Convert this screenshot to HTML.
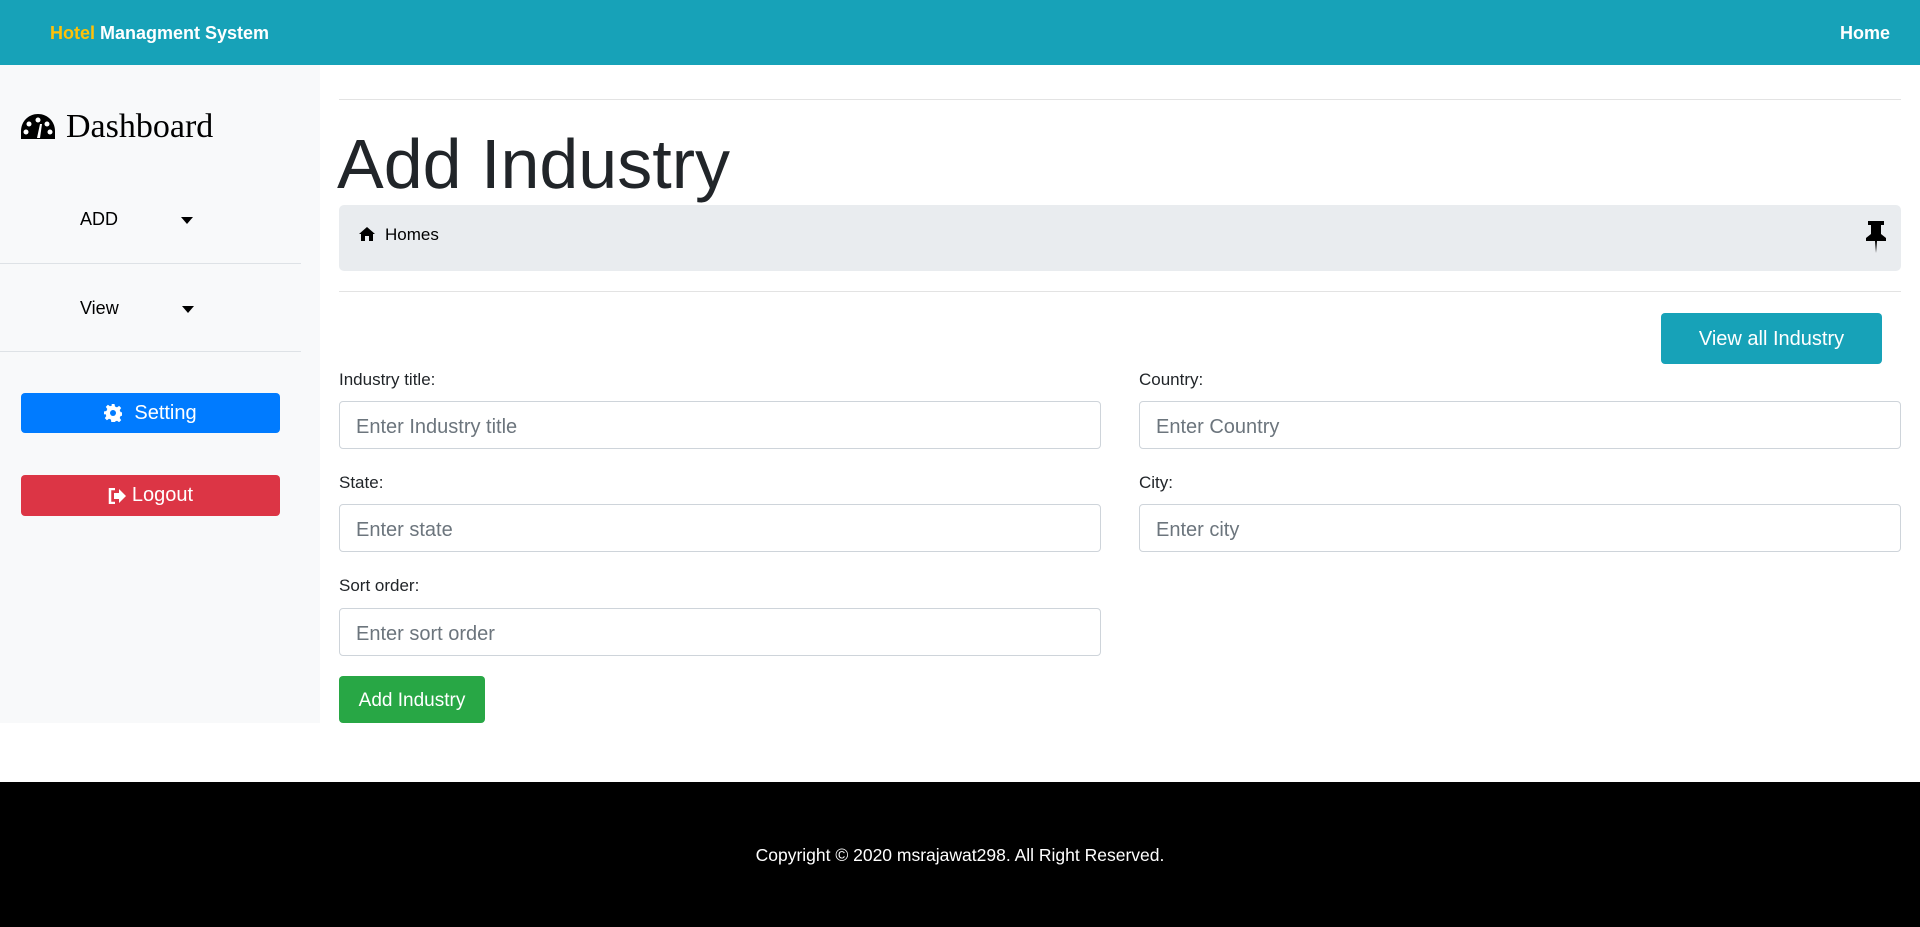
<!DOCTYPE html>
<html><head><meta charset="utf-8"><style>
*{box-sizing:border-box;margin:0;padding:0}
body{width:1920px;height:927px;overflow:hidden;font-family:"Liberation Sans",sans-serif;color:#212529;background:#fff;position:relative}
.nav{position:absolute;left:0;top:0;width:1920px;height:65px;background:#17a2b8}
.brand{position:absolute;left:50px;top:23px;font-size:18px;font-weight:bold;color:#fff}
.brand span{color:#ffc107}
.home{position:absolute;right:30px;top:23px;font-size:18px;font-weight:bold;color:#fff}
.side{position:absolute;left:0;top:65px;width:320px;height:658px;background:#f8f9fa}
.dash{position:absolute;left:20px;top:108px;font-family:"Liberation Serif",serif;font-size:34px;color:#000;display:flex;align-items:center;gap:10px}
.menu{position:absolute;left:80px;font-size:18px;color:#000}
.caret{position:absolute;width:0;height:0;border-left:6px solid transparent;border-right:6px solid transparent;border-top:7px solid #000}
.sh{position:absolute;left:0;width:301px;height:1px;background:#dee2e6}
.btn{position:absolute;border-radius:4px;color:#fff;font-size:20px;display:flex;align-items:center;justify-content:center;gap:12px}
.hr{position:absolute;left:339px;width:1562px;height:1px;background:#e3e3e3}
h1{position:absolute;left:337px;top:124px;font-size:70px;font-weight:normal;color:#212529}
.bc{position:absolute;left:339px;top:205px;width:1562px;height:66px;background:#e9ecef;border-radius:5px}
.lab{position:absolute;font-size:17px;color:#212529}
.inp{position:absolute;width:762px;height:48px;border:1px solid #ced4da;border-radius:4px;font-size:20px;color:#6c757d;padding:14px 16px 10px;line-height:22px}
.foot{position:absolute;left:0;top:782px;width:1920px;height:145px;background:#000;color:#fff;font-size:17.5px;text-align:center;padding-top:63px}
</style></head><body>
<div class="nav"><div class="brand"><span>Hotel</span> Managment System</div><div class="home">Home</div></div>
<div class="side">
</div>
<div class="dash"><svg width="36" height="28" viewBox="0 0 36 28"><path d="M18 1C8 1 1 9 1 18v8h34v-8C35 9 28 1 18 1z" fill="#000"/><circle cx="18" cy="7" r="2.5" fill="#fff"/><circle cx="9" cy="11" r="2.5" fill="#fff"/><circle cx="27" cy="11" r="2.5" fill="#fff"/><circle cx="6" cy="19" r="2.5" fill="#fff"/><circle cx="30" cy="19" r="2.5" fill="#fff"/><path d="M17 25l3-14 2 0-2 14z" fill="#fff"/></svg>Dashboard</div>
<div class="menu" style="top:209px">ADD</div><div class="caret" style="left:181px;top:217px"></div>
<div class="sh" style="top:263px"></div>
<div class="menu" style="top:298px">View</div><div class="caret" style="left:182px;top:306px"></div>
<div class="sh" style="top:351px"></div>
<div class="btn" style="left:21px;top:393px;width:259px;height:40px;background:#007bff"><svg width="18" height="18" viewBox="0 0 18 18"><path d="M7.5 0h3l.5 2.5 2 .9 2.1-1.5 2.1 2.1-1.5 2.1.9 2 2.4.4v3l-2.4.5-.9 2 1.5 2.1-2.1 2.1-2.1-1.5-2 .9-.5 2.4h-3L7 15.6l-2-.9-2.1 1.5-2.1-2.1 1.5-2.1-.9-2L0 10.5v-3L2.4 7l.9-2L1.8 2.9 3.9.8 6 2.3l2-.9z" fill="#fff"/><circle cx="9" cy="9" r="3" fill="#007bff"/></svg>Setting</div>
<div class="btn" style="left:21px;top:475px;width:259px;height:41px;background:#dc3545;gap:6px"><svg width="18" height="16" viewBox="0 0 18 16"><path d="M7 1H2v14h5" stroke="#fff" stroke-width="2.5" fill="none"/><path d="M6 5h5V1l7 7-7 7v-4H6z" fill="#fff"/></svg>Logout</div>
<div class="hr" style="top:99px"></div>
<h1>Add Industry</h1>
<div class="bc"><svg style="position:absolute;left:20px;top:22px" width="16" height="14" viewBox="0 0 16 14"><path d="M8 0L0 7h2v7h4V9h4v5h4V7h2z" fill="#000"/></svg><span style="position:absolute;left:46px;top:20px;font-size:17px;color:#000">Homes</span>
<svg style="position:absolute;right:13px;top:16px" width="24" height="34" viewBox="0 0 24 34"><path d="M4 0h16v4h-3v9l5 4v3H2v-3l5-4V4H4z" fill="#000"/><path d="M11 20h2l-1 12z" fill="#000"/></svg></div>
<div class="hr" style="top:291px"></div>
<div class="btn" style="left:1661px;top:313px;width:221px;height:51px;background:#17a2b8;padding-top:2px">View all Industry</div>
<div class="lab" style="left:339px;top:370px">Industry title:</div>
<div class="inp" style="left:339px;top:401px">Enter Industry title</div>
<div class="lab" style="left:1139px;top:370px">Country:</div>
<div class="inp" style="left:1139px;top:401px">Enter Country</div>
<div class="lab" style="left:339px;top:473px">State:</div>
<div class="inp" style="left:339px;top:504px">Enter state</div>
<div class="lab" style="left:1139px;top:473px">City:</div>
<div class="inp" style="left:1139px;top:504px">Enter city</div>
<div class="lab" style="left:339px;top:576px">Sort order:</div>
<div class="inp" style="left:339px;top:608px">Enter sort order</div>
<div class="btn" style="left:339px;top:676px;width:146px;height:47px;background:#28a745;font-size:19px;padding-top:2px">Add Industry</div>
<div class="foot">Copyright © 2020 msrajawat298. All Right Reserved.</div>
</body></html>
